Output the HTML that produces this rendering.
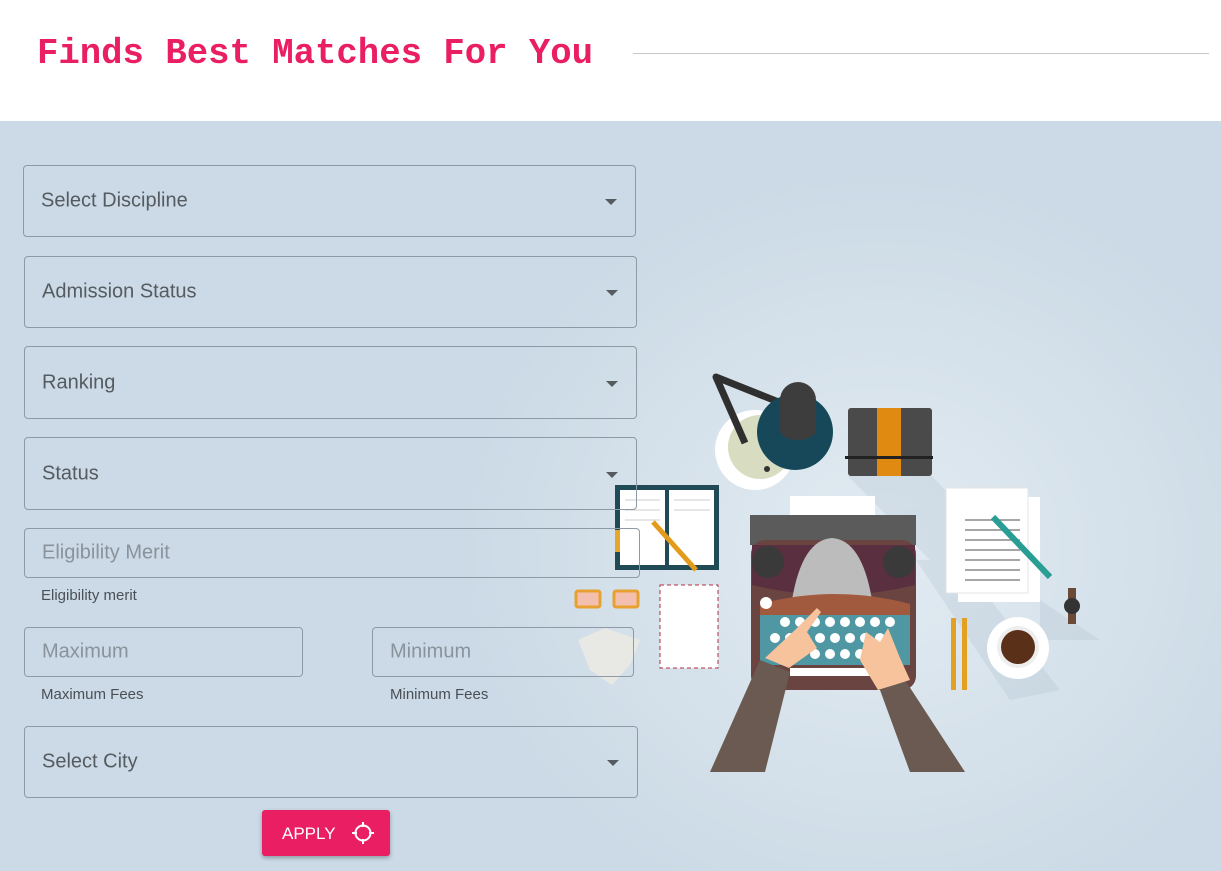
<!DOCTYPE html>
<html><head><meta charset="utf-8"><style>
*{margin:0;padding:0;box-sizing:border-box}
body{width:1221px;height:871px;overflow:hidden;font-family:"Liberation Sans",sans-serif;background:#fff;position:relative}
.hdr{position:absolute;left:0;top:0;width:1221px;height:121px;background:#fff}
.title{position:absolute;left:37px;top:33px;font-family:"Liberation Mono",monospace;font-weight:bold;font-size:36px;color:#e91e63;transform:scaleX(0.99);transform-origin:0 0;white-space:nowrap}
.line{position:absolute;left:633px;top:53px;width:576px;height:1px;background:#c8c8c8}
.main{position:absolute;left:0;top:121px;width:1221px;height:750px;background:radial-gradient(ellipse 420px 380px at 880px 430px,#e2ebf2 0%,#d6e2eb 55%,#cbdae6 100%)}
.f{position:absolute;border:1px solid #8e9aa6;border-radius:4px;font-size:20px;color:#555b60}
.f span{position:absolute;left:17px;top:50%;transform:translateY(-50%)}
.f.ph{color:#8a939b}
.arr{position:absolute;right:18px;top:50%;margin-top:-2px;width:0;height:0;border-left:6px solid transparent;border-right:6px solid transparent;border-top:6px solid #555b60}
.help{position:absolute;font-size:15px;color:#4a5056}
.btn{position:absolute;left:262px;top:810px;width:128px;height:46px;background:#e91e63;border-radius:3px;box-shadow:0 2px 4px rgba(0,0,0,.3);color:#fff;font-size:17px}
</style></head><body>
<div class="hdr"><div class="title">Finds Best Matches For You</div><div class="line"></div></div>
<div class="main"></div>
<svg style="position:absolute;left:0;top:0" width="1221" height="871">
<g opacity="0.25" fill="#a9bccb">
<polygon points="848,476 932,476 1010,560 930,560"/>
<polygon points="916,560 960,560 1060,690 1010,700"/>
<polygon points="1040,600 1100,640 1040,640"/>
</g>
<circle cx="755" cy="450" r="40" fill="#fff"/>
<circle cx="760" cy="447" r="32" fill="#d8dcc0"/>
<polyline points="745,443 716,377 786,405" fill="none" stroke="#2f2f2f" stroke-width="7" stroke-linejoin="round"/>
<circle cx="795" cy="432" r="38" fill="#17485a"/>
<path d="M780 400 a18 18 0 0 1 36 0 v30 a18 10 0 0 1 -36 0z" fill="#3d3d3d"/>
<circle cx="767" cy="469" r="3" fill="#333"/>
<rect x="848" y="408" width="84" height="68" rx="3" fill="#4a4a4a"/>
<rect x="877" y="408" width="24" height="68" fill="#e08a12"/>
<rect x="845" y="456" width="88" height="3" fill="#222"/>
<rect x="615" y="485" width="104" height="85" fill="#1f4a56"/>
<rect x="620" y="490" width="45" height="75" fill="#fff"/><rect x="669" y="490" width="45" height="75" fill="#fff"/>
<g stroke="#ccc" stroke-width="1"><line x1="625" y1="500" x2="660" y2="500"/><line x1="625" y1="510" x2="660" y2="510"/><line x1="625" y1="520" x2="660" y2="520"/><line x1="674" y1="500" x2="710" y2="500"/><line x1="674" y1="510" x2="710" y2="510"/></g>
<line x1="653" y1="522" x2="696" y2="570" stroke="#e49a1a" stroke-width="5"/>
<rect x="615" y="530" width="5" height="22" fill="#e4a72a"/>
<rect x="790" y="496" width="85" height="45" fill="#fff"/>
<rect x="750" y="515" width="166" height="30" fill="#5b5b5b"/>
<rect x="751" y="540" width="165" height="150" rx="14" fill="#6a4440"/>
<path d="M752 545 h163 v40 q-80 20 -163 0z" fill="#5a2f3f"/>
<circle cx="768" cy="562" r="16" fill="#3a3a3a"/><circle cx="899" cy="562" r="16" fill="#3a3a3a"/>
<path d="M792 600 q10 -60 40 -62 q30 2 40 62z" fill="#bcbcbc"/>
<path d="M760 604 q75 -20 150 0 v12 h-150z" fill="#a25a3f"/>
<rect x="760" y="615" width="150" height="50" fill="#4e97a3"/>
<g fill="#fff"><circle cx="766" cy="603" r="6"/><circle cx="785" cy="622" r="5"/><circle cx="800" cy="622" r="5"/><circle cx="815" cy="622" r="5"/><circle cx="830" cy="622" r="5"/><circle cx="845" cy="622" r="5"/><circle cx="860" cy="622" r="5"/><circle cx="875" cy="622" r="5"/><circle cx="890" cy="622" r="5"/><circle cx="775" cy="638" r="5"/><circle cx="790" cy="638" r="5"/><circle cx="805" cy="638" r="5"/><circle cx="820" cy="638" r="5"/><circle cx="835" cy="638" r="5"/><circle cx="850" cy="638" r="5"/><circle cx="865" cy="638" r="5"/><circle cx="880" cy="638" r="5"/><circle cx="785" cy="654" r="5"/><circle cx="800" cy="654" r="5"/><circle cx="815" cy="654" r="5"/><circle cx="830" cy="654" r="5"/><circle cx="845" cy="654" r="5"/><circle cx="860" cy="654" r="5"/><circle cx="875" cy="654" r="5"/><rect x="790" y="668" width="90" height="8"/></g>
<polygon points="710,772 760,660 790,672 765,772" fill="#6a5a52"/>
<polygon points="910,772 880,690 905,680 965,772" fill="#6a5a52"/>
<path d="M765 658 l30 -28 l22 -22 l4 4 l-14 20 l10 16 l-28 20z" fill="#f6c39c"/>
<path d="M878 690 l-18 -30 l6 -28 l14 10 l8 -14 l12 30 l10 22z" fill="#f6c39c"/>
<rect x="958" y="497" width="82" height="105" fill="#fff"/>
<rect x="946" y="488" width="82" height="105" fill="#fff" stroke="#e5e5e5"/>
<g stroke="#888" stroke-width="1.5"><line x1="965" y1="520" x2="1020" y2="520"/><line x1="965" y1="530" x2="1020" y2="530"/><line x1="965" y1="540" x2="1020" y2="540"/><line x1="965" y1="550" x2="1020" y2="550"/><line x1="965" y1="560" x2="1020" y2="560"/><line x1="965" y1="570" x2="1020" y2="570"/><line x1="965" y1="580" x2="1020" y2="580"/></g>
<line x1="993" y1="517" x2="1050" y2="577" stroke="#2a9d94" stroke-width="6"/>
<rect x="660" y="585" width="58" height="83" fill="#fff" stroke="#b03040" stroke-dasharray="4 3"/>
<rect x="576" y="591" width="24" height="16" rx="2" fill="#f3c0b0" stroke="#e8a030" stroke-width="3"/>
<rect x="614" y="591" width="24" height="16" rx="2" fill="#f3c0b0" stroke="#e8a030" stroke-width="3"/>
<polygon points="578,640 605,628 640,640 630,665 612,685 590,670" fill="#e8e8e4"/>
<rect x="951" y="618" width="5" height="72" fill="#e4a020"/><rect x="962" y="618" width="5" height="72" fill="#e4a020"/>
<circle cx="1018" cy="648" r="31" fill="#fff"/><circle cx="1018" cy="647" r="21" fill="#eee"/><circle cx="1018" cy="647" r="17" fill="#5a3018"/>
<rect x="1068" y="588" width="8" height="36" fill="#6b4a3a"/><circle cx="1072" cy="606" r="8" fill="#333"/>
</svg>
<div class="f" style="left:23px;top:165px;width:613px;height:72px"><span>Select Discipline</span><i class="arr"></i></div>
<div class="f" style="left:24px;top:256px;width:613px;height:72px"><span>Admission Status</span><i class="arr"></i></div>
<div class="f" style="left:24px;top:346px;width:613px;height:73px"><span>Ranking</span><i class="arr"></i></div>
<div class="f" style="left:24px;top:437px;width:613px;height:73px"><span>Status</span><i class="arr"></i></div>
<div class="f ph" style="left:24px;top:528px;width:616px;height:50px"><span>Eligibility Merit</span></div>
<div class="help" style="left:41px;top:587px">Eligibility merit</div>
<div class="f ph" style="left:24px;top:627px;width:279px;height:50px"><span>Maximum</span></div>
<div class="f ph" style="left:372px;top:627px;width:262px;height:50px"><span>Minimum</span></div>
<div class="help" style="left:41px;top:686px">Maximum Fees</div>
<div class="help" style="left:390px;top:686px">Minimum Fees</div>
<div class="f" style="left:24px;top:726px;width:614px;height:72px"><span>Select City</span><i class="arr"></i></div>
<div class="btn"><span style="position:absolute;left:20px;top:14px">APPLY</span>
<svg style="position:absolute;left:89px;top:11px" width="24" height="24" viewBox="0 0 24 24"><circle cx="12" cy="12" r="7.5" fill="none" stroke="#fff" stroke-width="2"/><path d="M12 1v5M12 18v5M1 12h5M18 12h5" stroke="#fff" stroke-width="2"/></svg></div>
</body></html>
